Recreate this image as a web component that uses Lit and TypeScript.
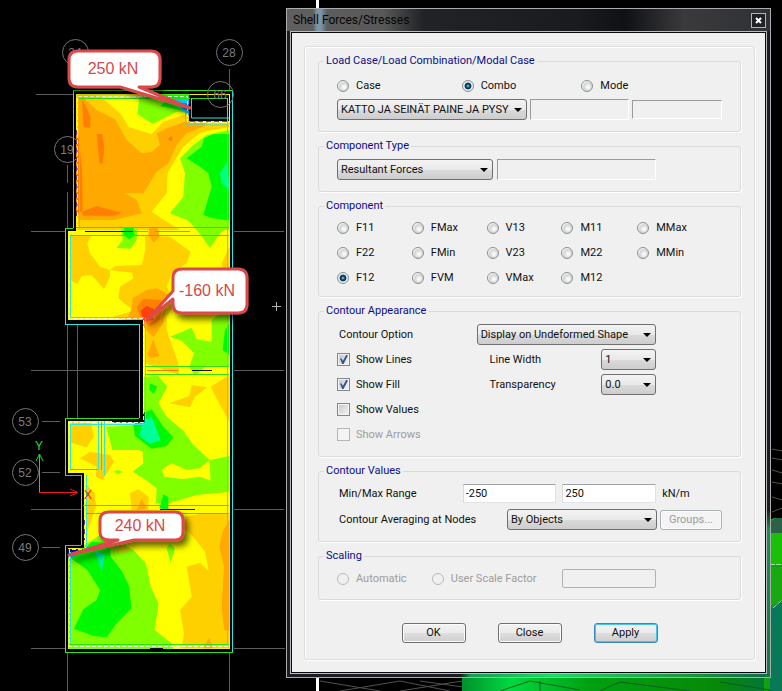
import { LitElement, html, svg, css } from "lit";
import { customElement, property } from "lit/decorators.js";

type Shape = [fill: string, points: string];

const GOLD = "#ffd000";
const ORANGE = "#ffa800";
const DEEP = "#ff8000";
const YELLOW = "#ffff00";
const LIME = "#80ff00";
const GREEN = "#00f800";
const TEAL = "#00ff80";

/* Contour bands, one list per part of the floor plan, at three units per pixel. */
const upper: Shape[] = [
  [GOLD, "230,195 300,198 335,228 365,255 385,290 415,300 455,312 490,275 550,255 600,275 688,280 688,290 600,308 550,350 520,400 503,430 500,490 455,545 500,575 540,600 230,600"],
  [ORANGE, "235,200 250,203 290,240 345,268 380,330 425,370 455,365 480,345 470,310 500,295 555,275 620,280 610,290 560,310 530,345 505,400 470,425 430,490 375,490 410,510 425,550 365,565 300,580 235,575"],
  [DEEP, "246,205 255,225 272,262 270,293 250,290"],
  [DEEP, "290,312 306,312 313,355 308,402 298,398"],
  [DEEP, "245,545 290,528 365,548 345,557 250,557"],
  [DEEP, "226,300 236,320 246,420 248,540 226,560"],
  [DEEP, "505,325 515,318 518,330 508,334"],
  [LIME, "418,200 412,252 458,282 492,265 530,245 575,250 575,195"],
  [GREEN, "425,193 570,193 570,250 530,238 480,228 500,212 440,205"],
  ["#00d0ff", "515,205 572,200 572,262 545,240"],
  ["#0070e0", "535,218 570,222 568,244 548,236"],
  [LIME, "688,300 620,315 580,345 540,385 555,430 550,500 510,550 560,570 600,600 688,600"],
  [GREEN, "688,312 640,312 612,325 605,350 560,385 600,410 625,430 635,470 610,555 640,565 688,572"],
  [TEAL, "682,395 660,430 665,460 688,480"],
];

const middle: Shape[] = [
  [GOLD, "235,0 360,0 320,14 235,22"],
  [LIME, "565,0 688,0 688,20 660,40 630,84 600,42"],
  [GOLD, "212,46 275,46 262,70 270,100 300,140 330,150 330,170 312,208 275,165 245,168 232,192 212,180"],
  [GOLD, "435,46 510,50 572,95 560,130 515,160 500,200 525,250 500,290 500,330 535,430 538,465 510,455 435,430 435,320 340,290 400,272 355,235 360,200 400,175 395,158 330,150 345,138 425,135 436,90"],
  [GOLD, "688,80 665,130 670,180 688,190"],
  [ORANGE, "395,265 398,235 440,210 470,205 515,228 500,260 490,310 460,352 430,320 385,290"],
  [DEEP, "410,262 430,236 485,240 485,270 478,300 452,318 425,300"],
  ["#ff4010", "422,272 440,258 462,268 458,300 430,304"],
  [ORANGE, "448,20 474,24 478,50 462,68 445,46"],
  [ORANGE, "460,358 478,408 455,414 442,404"],
  [LIME, "362,20 412,26 410,60 392,86 350,84 368,60"],
  [GREEN, "374,22 400,24 404,46 388,58 370,44"],
  [LIME, "635,300 660,280 688,270 688,438 620,436 585,468 568,440 582,400 545,362 510,350 575,323 590,358 635,365"],
  [GREEN, "675,330 688,310 688,405 668,390"],
  [LIME, "432,470 475,468 502,500 475,550 500,590 550,640 575,700 340,700 318,620 400,620 432,580"],
  [GREEN, "450,490 472,500 460,522 448,508"],
  [GOLD, "508,550 568,528 575,495 622,502 585,530 570,562"],
  [GOLD, "688,466 632,500 652,540 688,605"],
];

const lower: Shape[] = [
  [LIME, "318,82 400,76 450,20 500,50 550,92 580,135 630,180 688,168 688,275 590,285 505,310 468,310 470,265 430,235 398,215 430,190 428,155 380,135 340,120"],
  [YELLOW, "486,208 515,190 560,210 600,205 628,180 632,242 600,230 550,237 492,230"],
  [GREEN, "400,76 430,40 455,28 490,80 520,112 500,138 455,146 405,108"],
  ["#00ff98", "428,62 455,50 482,120 450,132 418,108"],
  [LIME, "340,215 355,210 368,216 355,222"],
  [GOLD, "212,66 272,68 282,110 260,142 212,128"],
  [GOLD, "240,175 270,155 330,165 342,185 308,240 288,230 290,200"],
  [GOLD, "390,280 415,268 446,290 445,332 395,330"],
  [ORANGE, "425,296 440,325 410,330"],
  [GREEN, "490,283 505,292 505,330 478,325"],
  [GOLD, "256,250 284,280 288,320 260,400 256,330"],
  [GOLD, "550,350 600,342 688,342 688,745 545,745 552,700 540,630 575,590 560,500 600,488 626,512 615,455 570,400 550,385"],
  [ORANGE, "688,360 668,395 658,440 672,500 665,620 672,690 688,692"],
  [ORANGE, "627,714 640,745 610,745"],
  [LIME, "206,465 260,432 300,405 350,430 400,450 438,490 452,560 476,610 464,690 515,730 520,748 206,748"],
  [GREEN, "206,470 250,450 275,425 330,430 332,470 365,512 388,560 394,625 350,670 320,712 280,708 222,686 250,628 290,600 300,570 262,510"],
  ["#00f0a0", "284,452 314,462 306,515"],
  ["#c8d800", "335,445 375,435 395,448 365,462"],
  [LIME, "510,430 525,445 512,490 500,445"],
  ["#00a0ff", "206,450 250,446 235,462 206,478"],
];

const PLAN = "M76 94H230V649H68V548H84V473H68V421H143V320H68V231H76Z";

const bubbles: [number, number, string][] = [
  [75, 52, "24"], [229, 52, "28"], [67, 149, "19"],
  [25, 421, "53"], [25, 472, "52"], [25, 547, "49"],
];

const contour = (shapes: Shape[]) =>
  shapes.map(([fill, points]) => svg`<polygon fill=${fill} points=${points} />`);

@customElement("plan-view")
export class PlanView extends LitElement {
  static styles = css`
    :host { display: block; width: 320px; height: 691px; }
    .plan { display: block; width: 100%; height: 100%; font-family: "Liberation Sans", Arial, sans-serif; }
    .grid { stroke: #5c5c5c; fill: none; }
    .bubble { stroke: #767676; fill: none; }
    .mark { fill: #7c7c7c; font-size: 12px; text-anchor: middle; }
    .note { fill: #d4494b; font-size: 16px; text-anchor: middle; }
    .axis { font-size: 12px; text-anchor: middle; }
    .balloon { fill: #fff; stroke: #dc494b; stroke-width: 3; stroke-linejoin: round; }
  `;

  render() {
    return html`
      <svg class="plan" viewBox="0 0 320 691" role="img" aria-label="F12 contour plan">
        <defs>
          <clipPath id="floor"><path d=${PLAN} /></clipPath>
          <filter id="shade" x="-20%" y="-20%" width="150%" height="160%">
            <feDropShadow dx="4" dy="5" stdDeviation="3" flood-color="#000" flood-opacity="0.6" />
          </filter>
        </defs>
        <path class="grid" d="M36 94.5H73M31 231.5H65M234 231.5H284M31 370.5H139M234 370.5H284M42 421.5H60M42 472.5H60M31 509.5H81M234 509.5H284M42 547.5H60M31 648.5H65M234 648.5H285M67.5 165V183M67.5 192V228M67.5 325V418M77.5 325V418M67.5 653V691M229.5 69V91M229.5 653V691" />
        ${bubbles.map(([x, y, name]) => svg`
          <circle class="bubble" cx=${x + 0.5} cy=${y + 0.5} r="13" />
          <text class="mark" x=${x} y=${y + 5}>${name}</text>`)}

        <g clip-path="url(#floor)">
          <rect x="60" y="90" width="175" height="565" fill="#ffff00" />
          <svg x="0" y="30" width="260" height="201" viewBox="0 0 780 603">${contour(upper)}</svg>
          <svg x="0" y="220" width="290" height="230" viewBox="0 0 870 690">${contour(middle)}</svg>
          <svg x="0" y="400" width="290" height="291" viewBox="0 0 870 873">${contour(lower)}</svg>
          <path d="M189 95H229V121H189Z" fill="#000" />
          <path d="M68 549H80L68 557Z" fill="#0010a0" />
          <path d="M85 231.5H133M192 370.5H212M160 509.5H195M150 648.5H163" stroke="#101020" />
          <path d="M133 231.5H148M155 231.5H190M147 370.5H178" stroke="#f08000" />
          <path d="M112 421H143V412" stroke="#000060" stroke-width="3" fill="none" />
        </g>
        <path d="M77.5 228V96.5H187.5V122.5H228M227.5 124V646.5H69.5V549.5H85.5V472M69.5 472V422.5H143.5V318.5H69.5V234" stroke="#fff" stroke-dasharray="4 2" fill="none" opacity="0.85" />
        <path d="M190 121.5H228" stroke="#e03010" stroke-dasharray="5 3" />
        <path d="M76.5 130V220M84.5 520V540" stroke="#803060" stroke-dasharray="5 4" />

        <g fill="none" stroke="#28e8e0">
          <path d="M73.5 91V228M65.5 228V324M139.5 324V418M65.5 418V475M81.5 475V545M65.5 545V652M232.5 91V652" />
          <path d="M79.5 98V228M70.5 235V318M145.5 318V422M227.5 98V645M70.5 424V469M98.5 421V469M104.5 421V475M86.5 475V548M70.5 552V645M191.5 98V118H229M185.5 112V125H227" />
          <path d="M65 324.5H139M70 317.5H144M70 424.5H143" />
        </g>
        <g fill="none" stroke="#30e010">
          <path d="M73 90.5H233M65 228.5H73M65 418.5H139M65 475.5H81M65 545.5H81M65 652.5H233M192 98.5H227" />
          <path d="M79 98.5H190M76 227.5H229M70 235.5H229M145 366.5H229M145 374.5H229M83 505.5H229M86 513.5H229M70 644.5H229M70 469.5H98M101.5 422V470" />
        </g>
        <path d="M190 94.5H229" stroke="#ffe800" />
        <circle class="bubble" cx="220.5" cy="94.5" r="13" />
        <text class="mark" x="220" y="99">66</text>

        <path d="M39.5 492V455M36 461L39.5 454L43 461" stroke="#10e020" fill="none" />
        <path d="M39 492.5H78M70 489L78 492.5L70 496" stroke="#f01818" fill="none" />
        <text class="axis" x="39" y="450" fill="#20e020">Y</text>
        <text class="axis" x="88" y="499" fill="#e02010">X</text>
        <path d="M272 306.5H281M276.5 302V311" stroke="#b0b0b0" />

        <path class="balloon" filter="url(#shade)" d="M78 51H151Q160 51 160 60V78Q160 87 151 87H139L190 108L120 87H78Q69 87 69 78V60Q69 51 78 51Z" />
        <text class="note" x="113" y="74">250 kN</text>

        <path class="balloon" filter="url(#shade)" d="M182 269H238Q247 269 247 278V304Q247 313 238 313H182Q173 313 173 304V299L147 320L173 291V278Q173 269 182 269Z" />
        <text class="note" x="207" y="296">-160 kN</text>

        <path class="balloon" filter="url(#shade)" d="M109 512H175Q183 512 183 520V532Q183 540 175 540H134L69 555L118 540H109Q100 540 100 532V520Q100 512 109 512Z" />
        <path d="M69 555L100 546" stroke="#dc494b" stroke-width="3" />
        <text class="note" x="140" y="531">240 kN</text>
        <path d="M317.5 0V691" stroke="#fff" stroke-width="3" />
      </svg>
    `;
  }
}

@customElement("model-view")
export class ModelView extends LitElement {
  static styles = css`
    :host { display: block; width: 464px; height: 260px; }
    .model { display: block; width: 100%; height: 100%; }
  `;

  render() {
    return html`
      <svg class="model" viewBox="318 431 464 260" aria-hidden="true">
        <defs>
          <linearGradient id="slab" x1="0" x2="1" y1="0" y2="0">
            <stop offset="0" stop-color="#00902c" />
            <stop offset="0.15" stop-color="#00d840" />
            <stop offset="0.4" stop-color="#00a010" />
            <stop offset="0.8" stop-color="#088808" />
            <stop offset="1" stop-color="#007048" />
          </linearGradient>
        </defs>
        <path d="M320 681L380 691M340 691L400 681L450 691M400 691L462 681M420 681L470 688M772 449L782 451M772 458L782 460M772 470L782 473M772 482L782 484M772 497L782 500M772 512L782 508" stroke="#505050" fill="none" />
        <path d="M462 678H782V691H462Z" fill="url(#slab)" />
        <path d="M764 522L774 518H782V691H764Z" fill="#10a010" />
        <path d="M770 522L776 518H782V533H770Z" fill="#2c6048" />
        <path d="M770 533H782V565H770Z" fill="#18c008" />
        <path d="M770 567H782V606H770Z" fill="#18a810" />
        <path d="M770 608L782 600V691H770Z" fill="#087858" />
        <path d="M770 564.5H782M773 608L782 600" stroke="#a0e0a0" fill="none" stroke-dasharray="5 1" />
        <path d="M500 691L530 681L580 690M600 691L620 682L690 691M540 691V681M720 682L770 690" stroke="#006020" fill="none" />
      </svg>
    `;
  }
}

@customElement("group-box")
export class GroupBox extends LitElement {
  @property() caption = "";

  static styles = css`
    :host { display: block; }
    .box {
      margin: 0;
      min-width: 0;
      padding: 6px 18px 11px;
      border: 1px solid #d9dadb;
      border-radius: 3px;
      box-shadow: 1px 1px 0 #fff;
    }
    .caption {
      margin-left: -13px;
      padding: 0 2px;
      height: 14px;
      line-height: 14px;
      color: #0c0c8c;
      background: #f0f0f0;
    }
  `;

  render() {
    return html`
      <fieldset class="box">
        <legend class="caption">${this.caption}</legend>
        <slot></slot>
      </fieldset>
    `;
  }
}

interface Choice {
  name: string;
  checked?: boolean;
  disabled?: boolean;
}

const components: Choice[] = [
  { name: "F11" }, { name: "FMax" }, { name: "V13" }, { name: "M11" }, { name: "MMax" },
  { name: "F22" }, { name: "FMin" }, { name: "V23" }, { name: "M22" }, { name: "MMin" },
  { name: "F12", checked: true }, { name: "FVM" }, { name: "VMax" }, { name: "M12" },
];

@customElement("forces-dialog")
export class ForcesDialog extends LitElement {
  static styles = css`
    :host { display: block; }
    * { box-sizing: border-box; }
    .window {
      padding: 0 3px 3px;
      border: 1px solid #a9adad;
      color: #101010;
      background:
        linear-gradient(to bottom, transparent 75%, #18904c 78%, #0c7848 100%) right / 5px 100% no-repeat,
        linear-gradient(to right, transparent 36%, #14a050 38%, #20d868 55%, #189040 85%, #106850) bottom / 100% 5px no-repeat,
        #1c1d20;
    }
    .title {
      display: flex;
      align-items: center;
      justify-content: space-between;
      height: 22px;
      padding: 0 4px 0 3px;
      margin: 0 -3px;
      background:
        linear-gradient(to right, transparent 26px, #7c93a8 30px, #7c93a8 34px, transparent 40px),
        linear-gradient(to right, #606060 0, #585858 20%, #222326 28%, #1a1b1f 60%, #101114 70%, #3a3a3d 82%, #303134);
    }
    .name { margin: 0; padding-left: 3px; font-size: 12px; font-weight: 400; color: #050505; }
    .close {
      display: grid;
      place-items: center;
      width: 15px;
      height: 15px;
      padding: 0;
      border: 1px solid #b4b4b4;
      background: #202124;
    }
    .client {
      padding: 14px 11px 13px 13px;
      border: 1px solid #b8bcbc;
      background: #f0f0f0;
      box-shadow: inset 0 0 0 1px #08090a;
    }
    .panel {
      display: flex;
      flex-direction: column;
      gap: 7px;
      padding: 7px 13px 16px;
      border: 1px solid #dcdddd;
      border-radius: 3px;
      box-shadow: inset 1px 1px 0 #fff, 1px 1px 0 #fff;
    }
    .row { display: grid; align-items: center; }
    .row + .row { margin-top: 4px; }
    .cases { grid-template-columns: 125fr 120fr 141fr; height: 14px; margin: 5px 0 6px; }
    .loads { grid-template-columns: 190fr 100fr 90fr; column-gap: 3px; }
    .kinds { grid-template-columns: 156fr 160fr 62fr; column-gap: 4px; }
    .parts { grid-template-columns: 75fr 75fr 75fr 76fr 85fr; row-gap: 11px; margin-top: 2px; }
    .option { grid-template-columns: 140fr 180fr 66fr; }
    .flags { grid-template-columns: 153fr 112fr 55fr 66fr; height: 21px; }
    .range { grid-template-columns: 120fr 94fr 94fr 60fr; column-gap: 6px; margin-bottom: 6px; }
    .average { grid-template-columns: 167fr 150fr 62fr; column-gap: 3px; }
    .scale { grid-template-columns: 95fr 131fr 94fr 66fr; }
    .indent { padding-left: 2px; }
    .choice { display: flex; align-items: center; gap: 7px; white-space: nowrap; }
    .off { color: #9c9c9c; }
    .radio, .check { appearance: none; flex: none; margin: 0; width: 12px; height: 12px; }
    .radio {
      border: 1px solid #8c8e90;
      border-radius: 50%;
      background: radial-gradient(circle at 60% 60%, #fafafa 10%, #d0d4d6 50%, #fff 75%);
    }
    .radio:checked {
      background: radial-gradient(circle at 50% 50%, #7cc8e8 5%, #17608c 20%, #0a304c 42%, #e8eef0 54%);
    }
    .radio:disabled { border-color: #b8babb; background: #f0f0f0; }
    .check {
      width: 13px;
      height: 13px;
      margin-right: -1px;
      border: 1px solid #84878a;
      box-shadow: inset 0 0 0 1px #f4f4f4;
      background: linear-gradient(135deg, #c2c6ca, #f6f6f6);
    }
    .check:checked::after {
      content: "";
      display: block;
      height: 11px;
      background: #34508c;
      clip-path: polygon(18% 42%, 34% 42%, 44% 64%, 76% 6%, 90% 14%, 50% 92%, 38% 92%);
    }
    .check:disabled { border-color: #b4b6b8; background: #f4f4f4; }
    .select, .field, .button { font: inherit; color: inherit; width: 100%; min-width: 0; margin: 0; }
    .select {
      appearance: none;
      height: 21px;
      padding: 0 12px 0 3px;
      border: 1px solid #6e6f70;
      border-radius: 3px;
      background:
        url("data:image/svg+xml,%3Csvg xmlns='http://www.w3.org/2000/svg' width='8' height='4'%3E%3Cpath d='M0 0H8L4 4Z'/%3E%3C/svg%3E") right 4px center no-repeat,
        linear-gradient(#f3f3f3, #e9e9e9 50%, #dadada 52%, #cdcdcd);
    }
    .field {
      height: 19px;
      padding: 0 2px;
      border: 1px solid;
      border-color: #a0a4a8 #e0e2e6 #e2e4e8 #d8dade;
      background: #fff;
    }
    .sunk { height: 21px; border-color: #9a9a9a #fff #fff #9a9a9a; background: #f0f0f0; }
    .short { height: 19px; }
    .blank { border-color: #b0b2b4; border-radius: 2px; background: #f0f0f0; }
    .button {
      width: 64px;
      height: 20px;
      padding: 0;
      border: 1px solid #707070;
      border-radius: 3px;
      box-shadow: inset 0 0 0 1px #fbfbfb;
      background: linear-gradient(#f2f2f2, #ebebeb 50%, #dddddd 52%, #cfcfcf);
    }
    .primary { border-color: #3c88b4; box-shadow: inset 0 0 0 1px #48c4f0; }
    .groups { width: 100%; border-color: #adb2b5; background: #f4f4f4; color: #9c9c9c; }
    .actions { display: flex; justify-content: center; gap: 32px; margin-top: 16px; }
  `;

  private radio(group: string, { name, checked = false, disabled = false }: Choice) {
    return html`
      <label class="choice ${disabled ? "off" : ""}">
        <input class="radio" type="radio" name=${group} ?checked=${checked} ?disabled=${disabled} />${name}
      </label>
    `;
  }

  private check({ name, checked = false, disabled = false }: Choice) {
    return html`
      <label class="choice ${disabled ? "off" : ""}">
        <input class="check" type="checkbox" ?checked=${checked} ?disabled=${disabled} />${name}
      </label>
    `;
  }

  render() {
    return html`
      <section class="window" role="dialog" aria-labelledby="name">
        <header class="title">
          <h1 class="name" id="name">Shell Forces/Stresses</h1>
          <button class="close" type="button" aria-label="Close window">
            <svg width="7" height="7" viewBox="0 0 7 7"><path d="M1 1L6 6M6 1L1 6" stroke="#fff" stroke-width="2" /></svg>
          </button>
        </header>
        <form class="client" @submit=${(e: Event) => e.preventDefault()}>
          <div class="panel">
            <group-box caption="Load Case/Load Combination/Modal Case">
              <div class="row cases">
                ${this.radio("case", { name: "Case" })}
                ${this.radio("case", { name: "Combo", checked: true })}
                ${this.radio("case", { name: "Mode" })}
              </div>
              <div class="row loads">
                <select class="select" aria-label="Load combination"><option>KATTO JA SEINÄT PAINE JA PYSY</option></select>
                <input class="field sunk" aria-label="Step" disabled />
                <input class="field sunk short" aria-label="Mode number" disabled />
              </div>
            </group-box>

            <group-box caption="Component Type">
              <div class="row kinds">
                <select class="select" aria-label="Component type"><option>Resultant Forces</option></select>
                <input class="field sunk" aria-label="Type detail" disabled />
              </div>
            </group-box>

            <group-box caption="Component">
              <div class="row parts">${components.map((item) => this.radio("part", item))}</div>
            </group-box>

            <group-box caption="Contour Appearance">
              <div class="row option">
                <label class="indent" for="option">Contour Option</label>
                <select class="select" id="option"><option>Display on Undeformed Shape</option></select>
              </div>
              <div class="row flags">
                ${this.check({ name: "Show Lines", checked: true })}
                <label for="width">Line Width</label>
                <select class="select" id="width"><option>1</option></select>
              </div>
              <div class="row flags">
                ${this.check({ name: "Show Fill", checked: true })}
                <label for="clear">Transparency</label>
                <select class="select" id="clear"><option>0.0</option></select>
              </div>
              <div class="row flags">${this.check({ name: "Show Values" })}</div>
              <div class="row flags">${this.check({ name: "Show Arrows", disabled: true })}</div>
            </group-box>

            <group-box caption="Contour Values">
              <div class="row range">
                <label class="indent" for="min">Min/Max Range</label>
                <input class="field" id="min" value="-250" />
                <input class="field" aria-label="Maximum" value="250" />
                <span>kN/m</span>
              </div>
              <div class="row average">
                <label class="indent" for="average">Contour Averaging at Nodes</label>
                <select class="select" id="average"><option>By Objects</option></select>
                <button class="button groups" type="button" disabled>Groups...</button>
              </div>
            </group-box>

            <group-box caption="Scaling">
              <div class="row scale">
                ${this.radio("scale", { name: "Automatic", disabled: true })}
                ${this.radio("scale", { name: "User Scale Factor", disabled: true })}
                <input class="field blank" aria-label="Scale factor" disabled />
              </div>
            </group-box>

            <div class="actions">
              <button class="button" type="button">OK</button>
              <button class="button" type="button">Close</button>
              <button class="button primary" type="submit">Apply</button>
            </div>
          </div>
        </form>
      </section>
    `;
  }
}

@customElement("app-root")
export class AppRoot extends LitElement {
  static styles = css`
    :host {
      display: block;
      position: relative;
      box-sizing: border-box;
      min-height: 100vh;
      overflow: hidden;
      background: #000;
      font: 11px/14px Roboto, "Liberation Sans", Arial, sans-serif;
    }
    .plan { position: absolute; left: 0; top: 0; }
    .model { position: absolute; right: 0; bottom: 0; }
    .dialog { position: relative; margin: 8px 11px 11px 286px; }
  `;

  render() {
    return html`
      <model-view class="model"></model-view>
      <plan-view class="plan"></plan-view>
      <forces-dialog class="dialog"></forces-dialog>
    `;
  }
}
